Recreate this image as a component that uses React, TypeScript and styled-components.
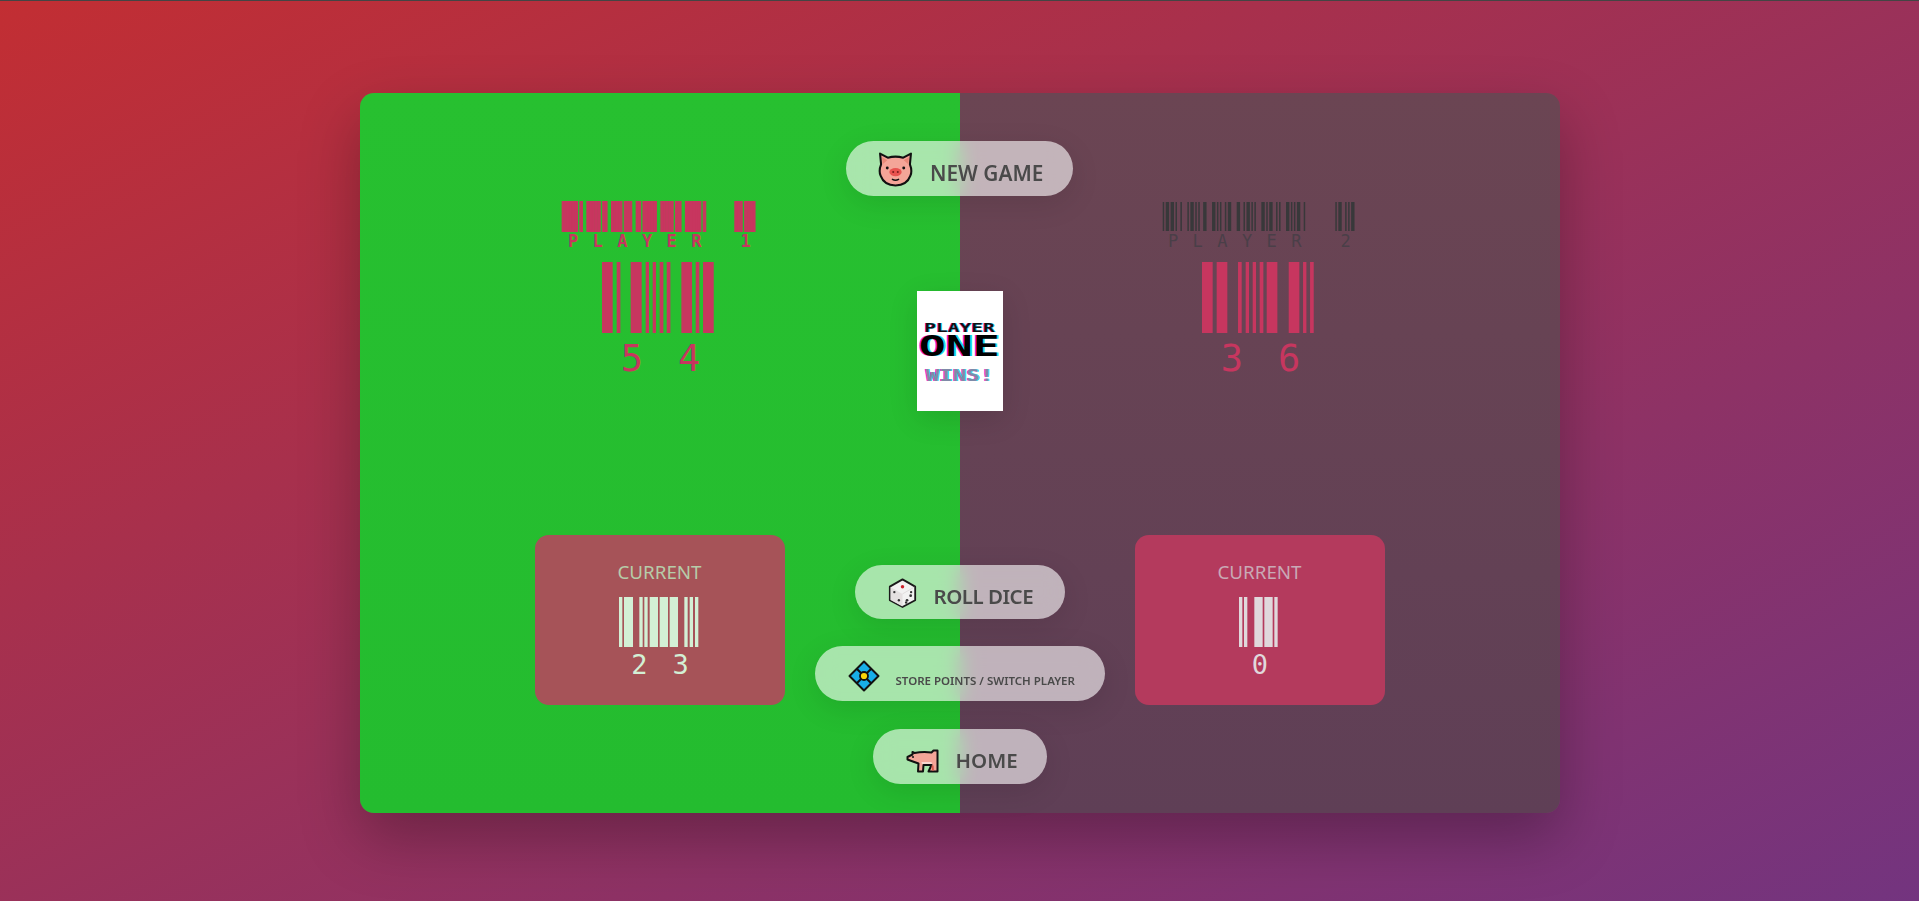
import React from "react";
import styled, { createGlobalStyle } from "styled-components";

const Global = createGlobalStyle`
  html, body { margin: 0; padding: 0; height: 100%; overflow: hidden; }
  body { font-family: "Noto Sans", "Open Sans", sans-serif; }
`;

const Page = styled.main`
  box-sizing: border-box;
  height: 901px;
  padding-top: 92px;
  border-top: 1px solid #444;
  display: flex;
  justify-content: center;
  align-items: flex-start;
  background: linear-gradient(to bottom right, #c22e33 0%, #73347f 100%);
`;

const Board = styled.section`
  position: relative;
  width: 1200px;
  height: 720px;
  border-radius: 14px;
  display: grid;
  grid-template-columns: 600px 600px;
  box-shadow: 0 25px 60px rgba(0, 0, 0, 0.28);
`;

const Panel = styled.div<{ $active: boolean }>`
  box-sizing: border-box;
  padding: 108px 0;
  display: flex;
  flex-direction: column;
  align-items: center;
  justify-content: space-between;
  border-radius: ${(p) => (p.$active ? "14px 0 0 14px" : "0 14px 14px 0")};
  background: ${(p) =>
    p.$active
      ? "linear-gradient(to bottom, #27c030, #24bc2f)"
      : "linear-gradient(to bottom, #6b4553, #5f3f56)"};
`;

const Head = styled.div`
  display: flex;
  flex-direction: column;
  align-items: center;
`;

const NameBars = styled.svg`
  display: block;
  width: 198px;
  height: 31px;
`;

const NameText = styled.div<{ $active: boolean }>`
  height: 21px;
  width: 198px;
  box-sizing: border-box;
  padding-left: 7.4px;
  font-family: "DejaVu Sans Mono", monospace;
  font-size: 17px;
  line-height: 18px;
  font-weight: ${(p) => (p.$active ? 700 : 400)};
  letter-spacing: 14.43px;
  white-space: pre;
  color: ${(p) => (p.$active ? "#c7365f" : "#4a3f48")};
`;

const ScoreBars = styled.svg`
  display: block;
  margin-top: 9px;
  width: 115.4px;
  height: 71px;
`;

const ScoreText = styled.div`
  margin-top: 4px;
  font-family: "DejaVu Sans Mono", monospace;
  font-size: 37px;
  line-height: 44px;
  letter-spacing: 35px;
  padding-left: 37px;
  color: #c7365f;
`;

const CurrentBox = styled.div<{ $active: boolean }>`
  box-sizing: border-box;
  width: 250px;
  height: 170px;
  padding-top: 24px;
  border-radius: 14px;
  display: flex;
  flex-direction: column;
  align-items: center;
  background: ${(p) => (p.$active ? "#a65358" : "#b43a5d")};
`;

const CurrentLabel = styled.div<{ $active: boolean }>`
  font-size: 18.8px;
  line-height: 26px;
  color: ${(p) => (p.$active ? "#b6cca9" : "#c9a9b5")};
`;

const CurrentBars = styled.svg`
  display: block;
  margin-top: 12px;
  height: 50px;
`;

const CurrentValue = styled.div<{ $active: boolean }>`
  margin-top: 2px;
  font-family: "DejaVu Sans Mono", monospace;
  font-size: 27px;
  line-height: 32px;
  color: ${(p) => (p.$active ? "#d3f0d5" : "#e0d8dc")};
  letter-spacing: ${(p) => (p.$active ? "25px" : "0")};
  padding-left: ${(p) => (p.$active ? "26px" : "1px")};
`;

const Overlay = styled.div`
  position: absolute;
  inset: 0;
  box-sizing: border-box;
  padding-top: 48px;
  display: flex;
  flex-direction: column;
  align-items: center;
  pointer-events: none;
`;

const Pill = styled.button<{ $w: number; $h?: number; $pad: number; $gap: number; $top?: number }>`
  box-sizing: border-box;
  flex: none;
  width: ${(p) => p.$w}px;
  height: ${(p) => p.$h ?? 55}px;
  margin-top: ${(p) => p.$top ?? 0}px;
  padding: 0 0 0 ${(p) => p.$pad}px;
  gap: ${(p) => p.$gap}px;
  display: flex;
  align-items: center;
  border: none;
  border-radius: 28px;
  background: rgba(255, 255, 255, 0.6);
  backdrop-filter: blur(10px);
  box-shadow: 0 8px 30px rgba(0, 0, 0, 0.1);
  color: #4a4a4a;
  font-family: "Noto Sans", sans-serif;
  font-weight: 600;
`;

const PillIcon = styled.span<{ $drop?: number }>`
  display: flex;
  flex: none;
  padding-top: ${(p) => (p.$drop ?? 0) * 2}px;
`;

const PillLabel = styled.span<{ $size: number; $drop: number; $track?: number }>`
  font-size: ${(p) => p.$size}px;
  line-height: 1;
  white-space: nowrap;
  letter-spacing: ${(p) => p.$track ?? 0}px;
  padding-top: ${(p) => p.$drop}px;
`;

const WinCard = styled.div`
  flex: none;
  margin-top: 95px;
  width: 86px;
  height: 120px;
  box-sizing: border-box;
  background: #fff;
  box-shadow: 0 8px 30px rgba(0, 0, 0, 0.12);
  display: flex;
  flex-direction: column;
  align-items: center;
  font-family: "DejaVu Sans Mono", monospace;
  font-weight: 700;
  overflow: hidden;
`;

const WinLine = styled.span<{ $size: number; $lh: number; $scale: number; $top: number; $color: string; $off: number }>`
  display: block;
  font-size: ${(p) => p.$size}px;
  line-height: ${(p) => p.$lh}px;
  margin-top: ${(p) => p.$top}px;
  color: ${(p) => p.$color};
  transform: scaleX(${(p) => p.$scale});
  text-shadow: ${(p) => p.$off}px 0 0 #18e0e8, -${(p) => p.$off}px 0 0 #f018d8;
`;

const BARS54 = [[187,219],[231,242],[273,306],[318,328],[339,349],[360,371],[381,392],[425,457],[468,479],[490,522]];
const BARS36 = [[187,219],[231,263],[295,306],[318,328],[339,349],[360,371],[381,413],[447,479],[490,500],[511,522]];
const BARS23 = [[267,277],[282,309],[328,338],[343,353],[359,384],[389,414],[419,444],[463,473],[479,489],[495,505]];
const BARS0 = [[328,338],[343,353],[374,399],[404,429],[434,444]];

const CODE39: Record<string, string> = {
  P: "001010010",
  L: "001000011",
  A: "100001001",
  Y: "110010000",
  E: "100011000",
  R: "100000110",
  "1": "100100001",
  "2": "001100001",
};

function code39Bars(text: string) {
  const bars: { x: number; w: number }[] = [];
  const narrow = 1.5;
  const wide = 3.4;
  const pitch = 24.66;
  text.split("").forEach((ch, i) => {
    const pattern = CODE39[ch];
    if (!pattern) return;
    let x = 1.7 + i * pitch;
    pattern.split("").forEach((bit, k) => {
      const w = bit === "1" ? wide : narrow;
      if (k % 2 === 0) bars.push({ x, w });
      x += w;
    });
  });
  return bars;
}

function NameBarcode({ text, active }: { text: string; active: boolean }) {
  const color = active ? "#c7365f" : "#38383a";
  return (
    <NameBars viewBox="0 0 198 31" aria-hidden>
      {code39Bars(text).map((b, i) => (
        <rect
          key={i}
          x={b.x}
          y={1}
          width={b.w}
          height={29}
          fill={color}
          stroke={active ? color : "none"}
          strokeWidth={active ? 2.1 : 0}
        />
      ))}
    </NameBars>
  );
}

function rectsOf(data: number[][], color: string) {
  return data.map(([a, b]) => <rect key={a} x={a} y={0} width={b - a} height={10} fill={color} />);
}

const PigFace = () => (
  <svg width="35" height="35" viewBox="0 0 34 34" aria-hidden>
    <path
      d="M2 1.5 L9.5 5.5 Q17 3.5 24.5 5.5 L32 1.5 L31 12 Q33.5 18 31.5 23 Q28 32.5 17 32.5 Q6 32.5 2.5 23 Q0.5 18 3 12 Z"
      fill="#f4a598"
      stroke="#111"
      strokeWidth="2"
      strokeLinejoin="round"
    />
    <path d="M4 5 L9 8 L4.5 12 Z M30 5 L25 8 L29.5 12 Z" fill="#e88878" />
    <ellipse cx="17" cy="19.5" rx="6" ry="4" fill="#e8524f" />
    <circle cx="14.8" cy="19.5" r="1" fill="#7a1c1c" />
    <circle cx="19.2" cy="19.5" r="1" fill="#7a1c1c" />
    <circle cx="9" cy="15.5" r="1.4" fill="#111" />
    <circle cx="25" cy="15.5" r="1.4" fill="#111" />
    <path d="M14 26.5 Q17 28.2 20 26.5" fill="none" stroke="#111" strokeWidth="1.4" strokeLinecap="round" />
  </svg>
);

const Dice = () => (
  <svg width="29" height="32" viewBox="0 0 32 34" aria-hidden>
    <path d="M16 2 L30 10 L30 25 L16 32.5 L2 25 L2 10 Z" fill="#f2f2f2" stroke="#1a1a1a" strokeWidth="2" strokeLinejoin="round" />
    <path d="M2.8 10.5 L16 18 L16 32 L2.8 24.6 Z" fill="#e4e0e0" />
    <path d="M16 18 L29 10.5" stroke="#d8d4d4" strokeWidth="0.8" />
    <circle cx="16" cy="10" r="1.9" fill="#cc1f2a" />
    <circle cx="7" cy="16" r="1.3" fill="#333" />
    <circle cx="12" cy="25" r="1.3" fill="#333" />
    <circle cx="21" cy="25" r="1.5" fill="#333" />
    <circle cx="25" cy="20" r="1.5" fill="#333" />
    <circle cx="20" cy="27.5" r="1.3" fill="#333" />
    <circle cx="25.5" cy="16" r="1.3" fill="#333" />
  </svg>
);

const Diamond = () => (
  <svg width="32" height="32" viewBox="0 0 32 32" aria-hidden>
    <path d="M16 1.5 L30.5 16 L16 30.5 L1.5 16 Z" fill="#18aee8" stroke="#111" strokeWidth="2" strokeLinejoin="round" />
    <path d="M8.8 8.8 L23.2 23.2 M23.2 8.8 L8.8 23.2" stroke="#111" strokeWidth="2" />
    <circle cx="16" cy="16" r="4" fill="#f7d308" stroke="#111" strokeWidth="1.8" />
  </svg>
);

const PigBody = () => (
  <svg width="33" height="24" viewBox="0 0 32 24" aria-hidden>
    <path
      d="M6 3 L8 4 Q16 2.5 25 3.5 L27 1.5 L31 1.5 L31 22.5 L22 22.5 L25 16 L17 16 L16.5 22.5 L11.5 22.5 L12 14.5 L5 12 L1 10.5 L1 8 L6 5.5 Z"
      fill="#f4a598"
      stroke="#111"
      strokeWidth="2"
      strokeLinejoin="round"
    />
    <path d="M15 13 L25 13 L25.5 15 L15.5 15 Z" fill="#f9d7d0" />
    <path d="M26 16.5 L26.5 21.5" stroke="#d8584a" strokeWidth="2" />
    <circle cx="6.5" cy="8" r="1" fill="#111" />
  </svg>
);

function Player({
  name,
  score,
  scoreBars,
  current,
  currentBars,
  active,
}: {
  name: string;
  score: string;
  scoreBars: number[][];
  current: string;
  currentBars: number[][];
  active: boolean;
}) {
  const start = currentBars[0][0];
  const span = active ? 246 : 124;
  return (
    <Panel $active={active}>
      <Head>
        <NameBarcode text={name} active={active} />
        <NameText $active={active}>{name}</NameText>
        <ScoreBars viewBox="187 0 346 10" preserveAspectRatio="none" aria-hidden>
          {rectsOf(scoreBars, "#c7365f")}
        </ScoreBars>
        <ScoreText>{score}</ScoreText>
      </Head>
      <CurrentBox $active={active}>
        <CurrentLabel $active={active}>CURRENT</CurrentLabel>
        <CurrentBars
          viewBox={`${start} 0 ${span} 10`}
          preserveAspectRatio="none"
          width={span / 3}
          aria-hidden
        >
          {rectsOf(currentBars, active ? "#d3f0d5" : "#e0d8dc")}
        </CurrentBars>
        <CurrentValue $active={active}>{current}</CurrentValue>
      </CurrentBox>
    </Panel>
  );
}

export default function App() {
  return (
    <>
      <Global />
      <Page>
        <Board>
          <Player name="PLAYER 1" score="54" scoreBars={BARS54} current="23" currentBars={BARS23} active />
          <Player name="PLAYER 2" score="36" scoreBars={BARS36} current="0" currentBars={BARS0} active={false} />
          <Overlay>
            <Pill $w={227} $pad={32} $gap={17}>
              <PillIcon $drop={0.5}><PigFace /></PillIcon>
              <PillLabel $size={20.8} $drop={9}>NEW GAME</PillLabel>
            </Pill>
            <WinCard>
              <WinLine $size={13} $lh={13} $scale={1.5} $top={30} $color="#111" $off={0.5}>PLAYER</WinLine>
              <WinLine $size={28} $lh={26} $scale={1.6} $top={0} $color="#000" $off={1}>ONE</WinLine>
              <WinLine $size={15} $lh={15} $scale={1.5} $top={9} $color="#7f8aa8" $off={0.6}>WINS!</WinLine>
            </WinCard>
            <Pill $w={210} $h={54} $pad={33} $gap={17} $top={154}>
              <PillIcon $drop={1}><Dice /></PillIcon>
              <PillLabel $size={20.5} $drop={9} $track={-0.5}>ROLL DICE</PillLabel>
            </Pill>
            <Pill $w={290} $pad={33} $gap={16} $top={27}>
              <PillIcon $drop={2.5}><Diamond /></PillIcon>
              <PillLabel $size={11.5} $drop={14}>STORE POINTS / SWITCH PLAYER</PillLabel>
            </Pill>
            <Pill $w={174} $pad={33} $gap={17} $top={28}>
              <PillIcon $drop={4}><PigBody /></PillIcon>
              <PillLabel $size={20.5} $drop={8}>HOME</PillLabel>
            </Pill>
          </Overlay>
        </Board>
      </Page>
    </>
  );
}
